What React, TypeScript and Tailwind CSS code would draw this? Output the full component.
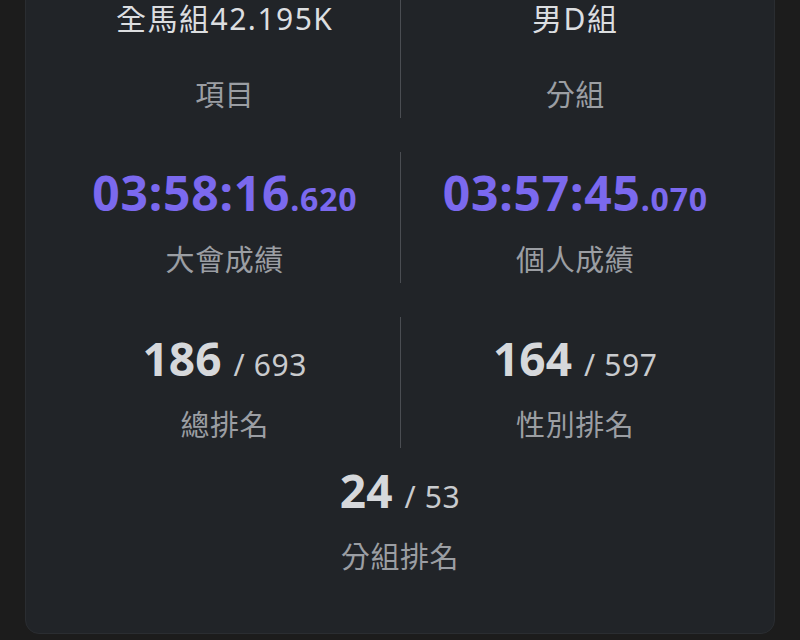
import React from "react";

const font = {
  fontFamily: '"Noto Sans", "Noto Sans CJK TC", sans-serif',
};

type Cell = {
  value: React.ReactNode;
  label: string;
  valueClass?: string;
};

const Stat = ({ value, label, valueClass = "" }: Cell) => (
  <div className="flex flex-col items-center pt-[30px]">
    <div className={"h-[56px] flex items-center justify-center " + valueClass}>
      {value}
    </div>
    <div className="mt-[19px] h-[40px] leading-[40px] text-[29px] tracking-[0.02em] text-[#9b9ea3]">
      {label}
    </div>
  </div>
);

const Time = ({ main, ms }: { main: string; ms: string }) => (
  <span className="text-[#7b69ee] font-bold tracking-[0.05em]">
    <span className="text-[48px]">{main}</span>
    <span className="text-[32px]">.{ms}</span>
  </span>
);

const Rank = ({ pos, total }: { pos: number; total: number }) => (
  <span className="flex items-baseline gap-[12px]">
    <span className="text-[46px] font-bold text-[#d6d8db]">{pos}</span>
    <span className="text-[30px] text-[#c9cbce] tracking-[0.02em]">/ {total}</span>
  </span>
);

const Row = ({ left, right }: { left: Cell; right: Cell }) => (
  <div className="grid grid-cols-[1fr_1px_1fr] h-[165px]">
    <Stat {...left} />
    <div className="my-[17px] bg-[#4a4d52]" />
    <Stat {...right} />
  </div>
);

export default function App() {
  return (
    <div className="w-[800px] h-[640px] overflow-hidden bg-[#1c1c1c]" style={font}>
      <div className="mx-[25px] -mt-[48px] rounded-[14px] border border-[#2a2d31] bg-[#212428] px-[24px] pt-[17px] pb-[56px]">
        <Row
          left={{
            value: (
              <span className="text-[30px] text-[#dcdee0] tracking-[0.05em]">全馬組42.195K</span>
            ),
            label: "項目",
            valueClass: "pb-[19px]",
          }}
          right={{
            value: <span className="text-[30px] text-[#dcdee0] tracking-[0.05em]">男D組</span>,
            label: "分組",
            valueClass: "pb-[19px]",
          }}
        />
        <Row
          left={{ value: <Time main="03:58:16" ms="620" />, label: "大會成績" }}
          right={{ value: <Time main="03:57:45" ms="070" />, label: "個人成績" }}
        />
        <Row
          left={{ value: <Rank pos={186} total={693} />, label: "總排名" }}
          right={{ value: <Rank pos={164} total={597} />, label: "性別排名" }}
        />
        <div className="-mt-[33px]">
          <Stat value={<Rank pos={24} total={53} />} label="分組排名" />
        </div>
      </div>
    </div>
  );
}
